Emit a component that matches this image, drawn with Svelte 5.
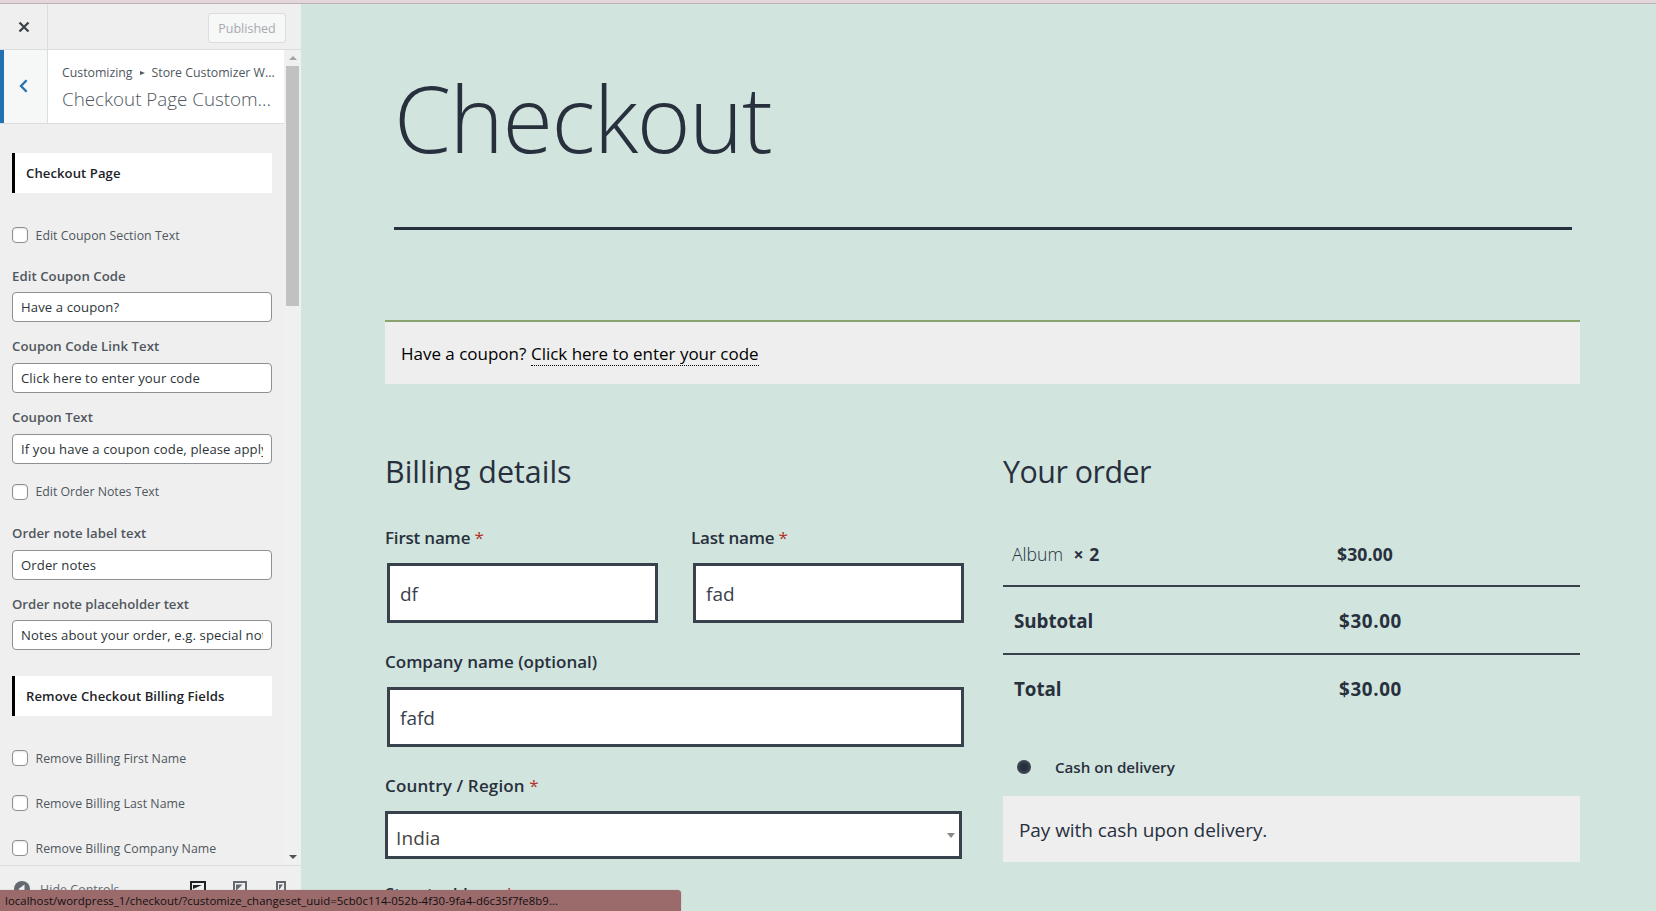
<script>
  const couponFields = [
    { label: 'Edit Coupon Code', value: 'Have a coupon?' },
    { label: 'Coupon Code Link Text', value: 'Click here to enter your code' },
    { label: 'Coupon Text', value: 'If you have a coupon code, please apply it below.' }
  ];
  const noteFields = [
    { label: 'Order note label text', value: 'Order notes' },
    { label: 'Order note placeholder text', value: 'Notes about your order, e.g. special notes for delivery.' }
  ];
  const billingToggles = ['Remove Billing First Name', 'Remove Billing Last Name', 'Remove Billing Company Name'];
</script>

{#snippet toggle(text)}
  <div class="toggle"><span class="box"></span><span>{text}</span></div>
{/snippet}

{#snippet field(f)}
  <div class="control">
    <div class="control-label">{f.label}</div>
    <div class="control-input"><span>{f.value}</span></div>
  </div>
{/snippet}

<div class="window">
  <div class="strip"></div>
  <div class="body">
    <aside>
      <header class="bar">
        <div class="close">
          <svg width="12" height="12" viewBox="0 0 12 12"><path d="M1.5 1.5 10.5 10.5M10.5 1.5 1.5 10.5" stroke="#3c434a" stroke-width="2.3" fill="none" /></svg>
        </div>
        <div class="published">Published</div>
      </header>
      <div class="panel">
        <div class="content">
          <div class="section-head">
            <div class="back">
              <svg width="9" height="14" viewBox="0 0 9 14"><path d="M7.6 1.2 2 7l5.6 5.8" stroke="#2271b1" stroke-width="2.3" fill="none" /></svg>
            </div>
            <div class="titles">
              <div class="crumb"><span>Customizing</span><i></i><span>Store Customizer W...</span></div>
              <div class="title">Checkout Page Custom...</div>
            </div>
          </div>
          <div class="controls">
            <h3>Checkout Page</h3>
            <div class="first-toggle">{@render toggle('Edit Coupon Section Text')}</div>
            <div class="group">
              {#each couponFields as f}{@render field(f)}{/each}
            </div>
            <div class="notes-toggle">{@render toggle('Edit Order Notes Text')}</div>
            <div class="group notes">
              {#each noteFields as f}{@render field(f)}{/each}
            </div>
            <h3 class="second">Remove Checkout Billing Fields</h3>
            <div class="billing">
              {#each billingToggles as t}{@render toggle(t)}{/each}
            </div>
          </div>
        </div>
        <div class="scroll">
          <svg width="8" height="4" viewBox="0 0 8 4"><path d="M0 4 4 0l4 4z" fill="#a3a3a3" /></svg>
          <div class="thumb"></div>
          <svg class="down" width="8" height="4" viewBox="0 0 8 4"><path d="M0 0h8L4 4z" fill="#505050" /></svg>
        </div>
      </div>
      <footer>
        <svg class="collapse" width="16" height="16" viewBox="0 0 16 16"><circle cx="8" cy="8" r="8" fill="#646970" /><path d="M10.5 3.6v8.8L4.5 8z" fill="#efefef" /></svg>
        <span class="hide">Hide Controls</span>
        <svg class="device" width="16" height="16" viewBox="0 0 16 16"><path d="M1 1h14v11H1z" fill="none" stroke="#1d2327" stroke-width="2" /><path d="M3 4h9L3 8z" fill="#1d2327" /><path d="M5 14h6v2H5z" fill="#1d2327" /></svg>
        <svg class="device" width="14" height="18" viewBox="0 0 14 18"><path d="M1 1h12v16H1z" fill="none" stroke="#646970" stroke-width="2" /><path d="M3 3.5h6.5L3 10z" fill="#646970" /></svg>
        <svg class="device" width="10" height="16" viewBox="0 0 10 16"><path d="M1 1h8v14H1z" fill="none" stroke="#646970" stroke-width="2" /><path d="M3 3.5h4L3 9z" fill="#646970" /></svg>
      </footer>
    </aside>

    <main>
      <h1>Checkout</h1>
      <div class="notice"><span class="ask">Have a coupon?</span><span class="link">Click here to enter your code</span></div>
      <div class="columns">
        <section class="details">
          <h2>Billing details</h2>
          <div class="names">
            <div><div class="lab first">First name <b>*</b></div><div class="inp">df</div></div>
            <div><div class="lab first">Last name <b>*</b></div><div class="inp">fad</div></div>
          </div>
          <div class="lab">Company name (optional)</div>
          <div class="inp">fafd</div>
          <div class="lab country">Country / Region <b>*</b></div>
          <div class="select"><span>India</span><svg width="8" height="5" viewBox="0 0 8 5"><path d="M0 0h8L4 5z" fill="#888" /></svg></div>
          <div class="lab street">Street address <b>*</b></div>
        </section>
        <section class="order">
          <h2>Your order</h2>
          <div class="row item"><span>Album <strong class="qty">× 2</strong></span><strong>$30.00</strong></div>
          <div class="row sum"><span>Subtotal</span><span class="price">$30.00</span></div>
          <div class="row sum last"><span>Total</span><span class="price">$30.00</span></div>
          <div class="method"><span class="radio"></span><span>Cash on delivery</span></div>
          <div class="pay">Pay with cash upon delivery.</div>
        </section>
      </div>
    </main>
  </div>
  <div class="status">localhost/wordpress_1/checkout/?customize_changeset_uuid=5cb0c114-052b-4f30-9fa4-d6c35f7fe8b9...</div>
</div>

<style>
  :global(body) { margin: 0; overflow: hidden; }
  * { box-sizing: border-box; }
  .window { position: relative; width: 1656px; height: 911px; overflow: hidden; display: flex; flex-direction: column; font-family: "Open Sans", "Noto Sans", sans-serif; white-space: nowrap; }
  .strip { height: 4px; flex: none; background: #e4d6d9; border-bottom: 1px solid #bbb0b6; }
  .body { flex: 1; display: flex; min-height: 0; }
  svg { display: block; flex: none; }

  aside { width: 301px; flex: none; background: #efefef; display: flex; flex-direction: column; font-size: 12.35px; color: #50575e; }
  .bar { height: 46px; flex: none; display: flex; justify-content: space-between; align-items: flex-start; border-bottom: 1px solid #dcdcde; padding-right: 15px; }
  .close { width: 48px; height: 45px; border-right: 1px solid #dcdcde; display: flex; align-items: center; justify-content: center; }
  .published { margin-top: 9px; width: 78px; height: 30px; border: 1px solid #dcdcde; border-radius: 3px; background: #f6f7f7; color: #a7aaad; font-size: 12.5px; line-height: 29px; text-align: center; }
  .panel { height: 815px; flex: none; display: flex; overflow: hidden; }
  .content { width: 284px; }
  .section-head { height: 74px; background: #fff; border-bottom: 1px solid #dcdcde; display: flex; }
  .back { width: 48px; border-left: 4px solid #2271b1; border-right: 1px solid #dcdcde; background: #f6f7f7; padding: 0 0 2px 15px; display: flex; align-items: center; }
  .titles { padding: 13px 0 0 14px; }
  .crumb { display: flex; align-items: center; height: 20px; line-height: 20px; letter-spacing: -0.02px; }
  .crumb i { border: 2.5px solid transparent; border-left: 5px solid #50575e; border-right: 0; margin: 0 7px; }
  .title { font-size: 18.8px; font-weight: 300; line-height: 26px; margin-top: 3px; }
  .controls { padding: 29px 12px 0; }
  h3 { margin: 0; height: 40px; border-left: 3px solid #000; background: #fff; color: #1d2327; font-size: 13.1px; font-weight: 600; line-height: 41px; padding-left: 11px; letter-spacing: 0.08px; }
  .toggle { height: 16px; line-height: 18px; display: flex; gap: 7.5px; letter-spacing: 0.02px; }
  .box { width: 16px; height: 16px; border: 1px solid #8c8f94; border-radius: 4px; background: #fff; box-shadow: inset 0 1px 2px rgba(0, 0, 0, 0.1); }
  .first-toggle { margin-top: 34px; }
  .group { margin-top: 23px; display: flex; flex-direction: column; gap: 13px; }
  .control-label { font-weight: 600; font-size: 13.2px; line-height: 23px; height: 28px; letter-spacing: 0.05px; }
  .control:first-child .control-label { height: 26px; line-height: 20px; }
  .group.notes .control:first-child .control-label { height: 27px; }
  .group.notes .control:last-child { margin-top: -1px; }
  .group.notes .control:last-child .control-label { line-height: 24px; letter-spacing: -0.03px; }
  .control-input { height: 30px; border: 1px solid #8c8f94; border-radius: 4px; background: #fff; padding: 0 8px; line-height: 29px; font-size: 13.1px; letter-spacing: 0.11px; color: #2c3338; }
  .control-input span { display: block; overflow: hidden; height: 28px; }
  .notes-toggle { margin-top: 20px; }
  .notes-toggle .toggle { line-height: 16px; letter-spacing: -0.03px; }
  h3.second { margin-top: 26px; }
  .billing { margin-top: 34px; display: flex; flex-direction: column; gap: 29px; }
  .scroll { flex: 1; display: flex; flex-direction: column; align-items: center; background: #f0f0f0; padding: 6px 0; }
  .thumb { width: 13px; height: 240px; background: #c1c1c1; margin-top: 6px; }
  .down { margin-top: auto; }
  footer { height: 46px; flex: none; border-top: 1px solid #dcdcde; display: flex; align-items: flex-start; padding: 15px 15px 0 14px; }
  .hide { margin: 0 auto 0 10px; line-height: 18px; color: #646970; letter-spacing: 0.08px; }
  .device + .device { margin-left: 27px; }
  .device:last-child { margin-left: 29px; }

  main { flex: 1; background: #d1e4dd; color: #28303d; padding: 0 76px 0 84px; overflow: hidden; }
  h1 { margin: 0 8px 0 9px; height: 226px; border-bottom: 3px solid #28303d; font-size: 92px; font-weight: 300; line-height: 130px; padding-top: 49px; letter-spacing: -1.5px; }
  .notice { margin-top: 90px; height: 64px; border-top: 2px solid #89a36f; background: #eee; color: #000; font-size: 17px; letter-spacing: -0.02px; line-height: 24px; padding: 20px 16px 0; display: flex; gap: 4.8px; }
  .link { border-bottom: 1px dotted #000; height: 24px; }
  .columns { display: flex; justify-content: space-between; margin-top: 67px; }
  section { width: 577px; }
  .details { width: 579px; }
  h2 { margin: 0; font-size: 30.4px; font-weight: 400; line-height: 42px; height: 40px; }
  .order h2 { letter-spacing: -0.5px; }
  .names { display: flex; gap: 33px; }
  .names > div { width: 273px; }
  .lab { font-size: 17px; font-weight: 600; line-height: 24px; margin: 27px 0 13px; }
  .lab.first { margin-top: 35px; margin-bottom: 13px; letter-spacing: -0.2px; }
  .lab b { color: #b3312b; font-weight: 400; }
  .lab.country { letter-spacing: 0.15px; }
  .inp { margin-left: 2px; height: 60px; border: 3px solid #39414d; background: #fff; font-size: 19px; line-height: 56px; padding-left: 10px; color: #39414d; }
  .select { width: 577px; height: 48px; border: 3px solid #39414d; background: #fff; font-size: 19px; line-height: 53px; padding: 0 4px 0 8px; display: flex; justify-content: space-between; align-items: center; color: #444; }
  .select span { height: 46px; letter-spacing: 0.1px; }
  .lab.street { margin-top: 23px; letter-spacing: -0.25px; }
  .row { display: grid; grid-template-columns: 325px 1fr; height: 68px; border-bottom: 2px solid #39414d; }
  .row.item { margin-top: 31px; height: 65px; font-size: 17.6px; font-weight: 300; line-height: 65px; padding-left: 9px; }
  .row.sum { font-size: 18.8px; font-weight: 700; line-height: 68px; padding-left: 11px; }
  .row.sum span:first-child { letter-spacing: -0.05px; }
  .row .price { letter-spacing: 0.65px; }
  .row.last { border: 0; }
  .row.item strong { font-weight: 700; letter-spacing: 0.1px; }
  .row.item .qty { margin-left: 6px; letter-spacing: 0.5px; }
  .method { display: flex; align-items: center; height: 24px; gap: 24px; margin: 32px 0 17px 14px; font-size: 15.2px; font-weight: 600; letter-spacing: -0.05px; }
  .radio { width: 14px; height: 14px; border-radius: 50%; background: #28303d; border: 3px solid #39414d; }
  .pay { height: 66px; background: #eee; font-size: 19px; line-height: 68px; padding-left: 16px; letter-spacing: -0.07px; }
  .status { position: absolute; left: 0; bottom: 0; width: 681px; height: 21px; background: #9b6a6b; color: #111; font-size: 11.4px; line-height: 22px; letter-spacing: 0.04px; padding-left: 5px; border-top-right-radius: 4px; box-shadow: 0 0 1px #777; }
</style>
